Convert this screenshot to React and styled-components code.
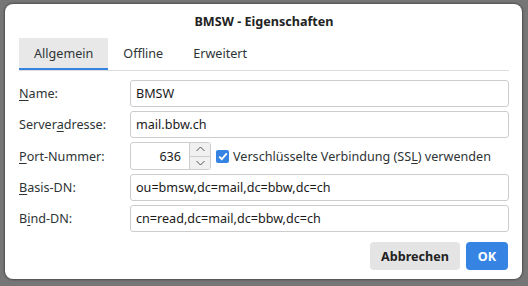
import React from "react";
import styled, { createGlobalStyle } from "styled-components";

const Global = createGlobalStyle`
  html, body { margin: 0; padding: 0; }
  body {
    width: 528px; height: 286px; overflow: hidden;
    background: #767676;
    font-family: "Noto Sans", "DejaVu Sans", sans-serif;
    font-size: 12.6px; color: #2e3436;
  }
`;

const Screen = styled.div`
  width: 528px; height: 286px; box-sizing: border-box;
  padding: 4px 6px 0 5px;
`;

const Dialog = styled.div`
  width: 517px; height: 275px; box-sizing: border-box;
  background: #fff; border-radius: 8px;
  box-shadow: 0 0 2px 1px rgba(0,0,0,0.35);
  display: flex; flex-direction: column;
  padding: 0 13px 0 14px;
`;

const Title = styled.div`
  height: 34px; display: flex; align-items: center; justify-content: center;
  font-weight: 700; color: #222; box-sizing: border-box;
`;

const TabBar = styled.div`
  display: flex; border-bottom: 1px solid #dcdcdc; height: 33px; box-sizing: border-box;
`;

const Tab = styled.div`
  height: 32px; box-sizing: border-box;
  padding: 0 15px; display: flex; align-items: center;
  background: ${p => (p.$active ? "#e8e8e8" : "transparent")};
  border-bottom: 2px solid ${p => (p.$active ? "#3584e4" : "transparent")};
  color: #2e3436; padding-top: 1px;
`;

const Form = styled.div`
  margin-top: 9px;
  display: grid; grid-template-columns: 111px 1fr; row-gap: 4px;
  align-items: center;
`;

const Label = styled.label`
  color: #2e3436;
  u { text-decoration: underline; text-underline-offset: 2px; }
`;

const Input = styled.div`
  height: 27px; box-sizing: border-box;
  border: 1px solid #cdcdcd; border-radius: 3px;
  display: flex; align-items: center; padding: 0 5px;
  color: #1a1a1a; background: #fff;
`;

const PortRow = styled.div`
  display: flex; align-items: center;
`;

const Spin = styled.div`
  display: flex; height: 28px; box-sizing: border-box;
  border: 1px solid #cdcdcd; border-radius: 3px; overflow: hidden;
`;

const SpinValue = styled.div`
  width: 58px; display: flex; align-items: center; justify-content: flex-end;
  padding-right: 8px; box-sizing: border-box; color: #1a1a1a;
`;

const SpinButtons = styled.div`
  width: 20px; display: flex; flex-direction: column;
  border-left: 1px solid #cdcdcd; background: #f0f0f0;
`;

const SpinBtn = styled.div`
  flex: 1; display: flex; align-items: center; justify-content: center;
  & + & { border-top: 1px solid #cdcdcd; }
`;

const Check = styled.div`
  width: 13px; height: 13px; border-radius: 2px; background: #3584e4;
  margin-left: 5px; margin-right: 4px; display: flex; align-items: center; justify-content: center;
`;

const CheckLabel = styled.span`
  u { text-decoration: underline; text-underline-offset: 2px; }
`;

const Buttons = styled.div`
  display: flex; justify-content: flex-end; gap: 6px; margin-top: 10px; padding-right: 1px;
`;

const Button = styled.div`
  height: 28px; box-sizing: border-box; border-radius: 4px;
  display: flex; align-items: center; justify-content: center;
  font-weight: 700;
  background: ${p => (p.$primary ? "#3584e4" : "#e4e4e5")};
  color: ${p => (p.$primary ? "#fff" : "#222")};
  width: ${p => (p.$primary ? "42px" : "90px")};
`;

const Chevron = ({ up }) => (
  <svg width="9" height="6" viewBox="0 0 9 6">
    <path d={up ? "M0.5 5 L4.5 1 L8.5 5" : "M0.5 1 L4.5 5 L8.5 1"} fill="none" stroke="#555" strokeWidth="1" />
  </svg>
);

export default function App() {
  return (
    <>
      <Global />
      <Screen>
        <Dialog>
          <Title>BMSW - Eigenschaften</Title>
          <TabBar>
            <Tab $active>Allgemein</Tab>
            <Tab>Offline</Tab>
            <Tab>Erweitert</Tab>
          </TabBar>
          <Form>
            <Label><u>N</u>ame:</Label>
            <Input>BMSW</Input>
            <Label>Server<u>a</u>dresse:</Label>
            <Input>mail.bbw.ch</Input>
            <Label><u>P</u>ort-Nummer:</Label>
            <PortRow>
              <Spin>
                <SpinValue>636</SpinValue>
                <SpinButtons>
                  <SpinBtn><Chevron up /></SpinBtn>
                  <SpinBtn><Chevron /></SpinBtn>
                </SpinButtons>
              </Spin>
              <Check>
                <svg width="10" height="9" viewBox="0 0 10 9">
                  <path d="M1.2 4.6 L3.8 7.2 L8.8 1.4" fill="none" stroke="#fff" strokeWidth="1.8" />
                </svg>
              </Check>
              <CheckLabel>Verschlüsselte Verbindung (SS<u>L</u>) verwenden</CheckLabel>
            </PortRow>
            <Label><u>B</u>asis-DN:</Label>
            <Input>ou=bmsw,dc=mail,dc=bbw,dc=ch</Input>
            <Label>B<u>i</u>nd-DN:</Label>
            <Input>cn=read,dc=mail,dc=bbw,dc=ch</Input>
          </Form>
          <Buttons>
            <Button>Abbrechen</Button>
            <Button $primary>OK</Button>
          </Buttons>
        </Dialog>
      </Screen>
    </>
  );
}
